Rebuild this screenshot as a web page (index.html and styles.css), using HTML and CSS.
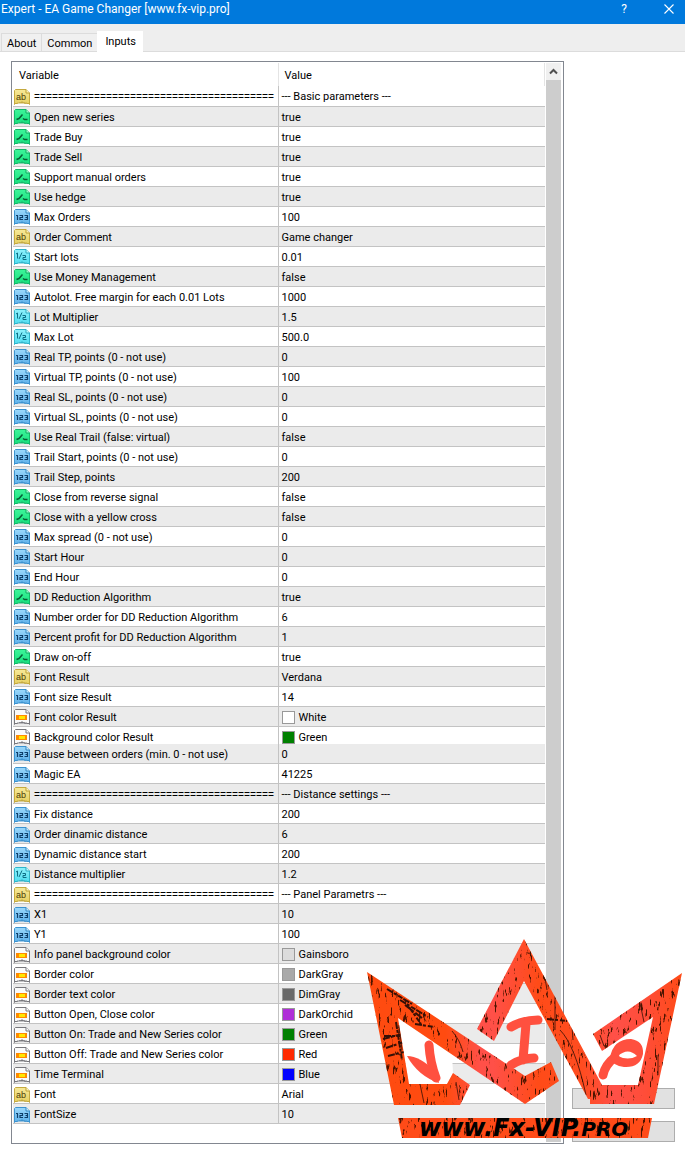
FILE: index.html
```html
<!DOCTYPE html>
<html lang="en">
<head>
<meta charset="utf-8">
<title>Expert - EA Game Changer</title>
<link rel="stylesheet" href="styles.css">
</head>
<body>
<svg class="defs" aria-hidden="true">
  <defs>
    <linearGradient id="gy" x2="0" y2="1"><stop offset="0" stop-color="#f8e998"/><stop offset="1" stop-color="#e6d060"/></linearGradient>
    <linearGradient id="gg" x2="0" y2="1"><stop offset="0" stop-color="#3df59a"/><stop offset="1" stop-color="#14e07c"/></linearGradient>
    <linearGradient id="gb" x2="0" y2="1"><stop offset="0" stop-color="#9bd8fb"/><stop offset="1" stop-color="#5cb0ea"/></linearGradient>
    <linearGradient id="gc" x2="0" y2="1"><stop offset="0" stop-color="#8ff1fb"/><stop offset="1" stop-color="#4cdcf0"/></linearGradient>
    <path id="sheet" d="M.5 1.500L1.500 .5H12L15.500 4V15.500L14 14L13 15L12 13.500L11 15L10 13L9 14.500L8 12.500L7 14.500L6 13L5 14.500L4 13.500L3 15L2 14L.5 15.500Z"/>
    <symbol id="ab" viewBox="0 0 16 16"><use href="#sheet" fill="url(#gy)" stroke="#c4a93f"/><path d="M12 .5V4H15.500" fill="#fff6bd" stroke="#bc9f35"/><text x="2" y="11" class="glyph">ab</text></symbol>
    <symbol id="bool" viewBox="0 0 16 16"><use href="#sheet" fill="url(#gg)" stroke="#12b868"/><path d="M12 .5V4H15.500" fill="#9dffd0" stroke="#12a860"/><path d="M2.500 10.500L5 9.500L8.500 5.500M9 9.500L10.500 10.500H13.500" fill="none" stroke="#075c36" stroke-width="1.500"/></symbol>
    <symbol id="int" viewBox="0 0 16 16"><use href="#sheet" fill="url(#gb)" stroke="#3b92cf"/><path d="M12 .5V4H15.500" fill="#c9ecff" stroke="#3387c2"/><path d="M2 6.500H3.500V11M5.500 6.500H8.500V8.500H6V10.500H9M10.500 6.500H13.500V10.500H10.500M11.500 8.500H13.500" fill="none" stroke="#0d3d68" stroke-width="1.200"/></symbol>
    <symbol id="num" viewBox="0 0 16 16"><use href="#sheet" fill="url(#gc)" stroke="#2fb4ca"/><path d="M12 .5V4H15.500" fill="#c9fbff" stroke="#2ba9bf"/><path d="M2 5L3.500 4V9.500M5 10L8 3.500M8.500 6.500H11.500V8.500H9V10.500H12.500" fill="none" stroke="#0d6d84"/></symbol>
    <symbol id="color" viewBox="0 0 16 16"><use href="#sheet" fill="#fafafa" stroke="#77777c"/><path d="M12 .5V4H15.500" fill="#fff" stroke="#77777c"/><path fill="#ff8a00" d="M2 6H13V11H2Z"/><path fill="#ffe600" d="M5 7H11V10H5Z"/></symbol>
  </defs>
</svg>
<div class="dialog">
  <header class="titlebar">
    <h1 class="title">Expert - EA Game Changer [www.fx-vip.pro]</h1>
    <button class="caption-btn" type="button" aria-label="Help">?</button>
    <button class="caption-btn" type="button" aria-label="Close"><svg width="10" height="10" viewBox="0 0 10 10"><path d="M.5 .5L9.500 9.500M9.500 .5L.5 9.500" stroke="#fff" stroke-width="1.100"/></svg></button>
  </header>
  <nav class="tabs" role="tablist">
    <button class="tab" role="tab" type="button">About</button>
    <button class="tab" role="tab" type="button">Common</button>
    <button class="tab active" role="tab" type="button" aria-selected="true">Inputs</button>
  </nav>
  <main class="panel">
    <div class="list">
      <table class="grid">
        <thead><tr><th class="name">Variable</th><th>Value</th></tr></thead>
        <tbody id="rows"></tbody>
      </table>
      <div class="scrollbar"><button class="scroll-up" type="button" aria-label="Scroll up"><svg width="9" height="7" viewBox="0 0 9 7"><path d="M1 5.500L4.500 2L8 5.500" fill="none" stroke="#505050" stroke-width="2"/></svg></button></div>
    </div>
    <aside class="actions">
      <button class="action" type="button" aria-label="Load"></button>
      <button class="action" type="button" aria-label="Save"></button>
    </aside>
    <svg class="crown" viewBox="366 938 318 208" role="img" aria-label="VIP crown">
      <defs>
        <path id="crown-left" d="M367 972L525 1076L551 1062L559 1081L525 1104L398 1018L409 1084H447L453 1073L470 1085L460 1105H394Z"/>
        <path id="crown-right" d="M524 939L602 1085H638L653 1017L602 1051L593 1034L682 973L654 1104H590V1099H588L524 981L494 1041L477 1029Z"/>
        <clipPath id="crown-clip"><use href="#crown-left"/><use href="#crown-right"/></clipPath>
        <filter id="scratch" x="0" y="0" width="1" height="1" color-interpolation-filters="sRGB">
          <feTurbulence type="fractalNoise" baseFrequency=".42 .08" numOctaves="4" seed="12" result="n"/>
          <feColorMatrix in="n" values="0 0 0 0 .3  0 0 0 0 .08  0 0 0 0 0  0 0 0 10 -6.3" result="s"/>
          <feComposite in="s" in2="SourceGraphic" operator="in" result="t"/>
          <feMerge><feMergeNode in="SourceGraphic"/><feMergeNode in="t"/></feMerge>
        </filter>
        <linearGradient id="red" gradientUnits="userSpaceOnUse" x1="366" y1="0" x2="684" y2="0"><stop offset="0" stop-color="#ff4b10"/><stop offset=".25" stop-color="#ff4b10"/><stop offset=".36" stop-color="#ff5048"/><stop offset=".4" stop-color="#ff5048"/><stop offset=".54" stop-color="#ff4b18"/><stop offset=".68" stop-color="#ff4c20"/><stop offset=".78" stop-color="#ff5048"/><stop offset=".88" stop-color="#ff4d38"/><stop offset="1" stop-color="#ff4b14"/></linearGradient>
      </defs>
      <path fill="#fff" d="M398 1018L452 1054L453 1073L447 1084H409Z"/>
      <g filter="url(#scratch)">
        <g fill="url(#red)"><use href="#crown-left"/><use href="#crown-right"/></g>
        <path fill="#ff4b18" d="M398 1118H652L648 1138H402Z"/>
      </g>
      <g fill="none" stroke="#ff503f" stroke-width="9" stroke-linecap="round" stroke-linejoin="round">
        <path d="M429 1045Q430 1062 436 1078M511 1027Q523 1020 538 1020M526 1024L523 1060M511 1065Q522 1058 534 1058"/>
        <path d="M603 1075Q605 1065 615 1057"/>
      </g>
      <path fill="#ff503f" d="M407 1056Q420 1056 436 1072L439 1083Q418 1076 407 1056Z"/>
      <path fill="#ff503f" fill-rule="evenodd" d="M610 1058Q613 1039 631 1039Q644 1041 643 1054Q640 1068 624 1067Q613 1066 610 1058ZM618 1056Q628 1047 637 1056Q628 1061 618 1056Z"/>
      <g fill="none" stroke="#351006" clip-path="url(#crown-clip)">
        <path opacity=".8" d="M399 1025L402 1050M452 1031Q460 1040 463 1052M543 966L547 990M555 988V1030M571 1012L573 1040M560 1030Q575 1045 586 1095M640 1003L644 1022M658 1055V1075M600 1035L604 1046M456 1082L459 1100M420 1084L424 1103"/>
        <path stroke-width="2" d="M387 989L412 1004M400 1000L428 1017M405 1005L422 1018M415 1024L434 1027M409 1007L421 1024M383 1039L402 1034M384 1036H400M386 1048L404 1042M388 1056L404 1052M396 1022L402 1060M425 1040L434 1046M547 1019L567 1021" stroke-dasharray="7 1 3 2 5 1"/>
      </g>
      <text class="crown-text" x="419" y="1136">www.Fx-VIP.<tspan class="small">PRO</tspan></text>
    </svg>
  </main>
</div>
<script src="rows.js"></script>
</body>
</html>
```
FILE: styles.css
```css
* { box-sizing: border-box; }
body { margin: 0; background: #fff; color: #000; font: 11px/20px Roboto, "Liberation Sans", Arial, sans-serif; }
button { font: inherit; color: inherit; padding: 0; border: 0; background: none; }
.defs { position: absolute; width: 0; height: 0; }
.dialog { min-height: 100vh; display: flex; flex-direction: column; }
.titlebar { display: flex; align-items: flex-start; height: 24px; padding-right: 6px; background: #0079dc; color: #fff; font: 12px/18px Roboto, "Open Sans", sans-serif; }
.title { margin: 0 auto 0 1px; font: inherit; }
.caption-btn { width: 45px; height: 17px; padding-left: 25px; display: flex; align-items: center; justify-content: center; }
.tabs { display: flex; align-items: flex-end; height: 28px; padding-left: 1px; background: #eee; border-bottom: 1px solid #dcdcdc; }
.tab { height: 18px; line-height: 19px; padding: 0 5px; border: 1px solid #dcdcdc; border-bottom: 0; border-right: 0; background: #f0f0f0; }
.tab.active { height: 21px; margin-bottom: -1px; padding: 0 7px 1px; background: #fff; border-color: #fff; }
.panel { position: relative; flex: 1; display: flex; padding: 9px 10px 9px 11px; gap: 8px; }
.list { flex: 1; display: flex; align-items: stretch; border: 1px solid #828790; padding: 1px; }
.grid { flex: 1; align-self: flex-start; table-layout: fixed; border-collapse: collapse; }
.grid th { height: 23px; padding: 2px 6px 0; line-height: 19px; font-weight: 400; text-align: left; border-right: 1px solid #e4e4e4; }
.grid th.name { width: 265px; }
.grid td { height: 20px; padding: 0 3px; line-height: 17px; border-bottom: 1px solid #c3c3c3; white-space: nowrap; }
.grid td:first-child { padding-left: 1px; border-right: 1px solid #c3c3c3; }
.grid tr:nth-child(even) td { background: #ebebeb; }
.grid tr.joined td { height: 17px; border-bottom: 0; }
.cell { display: flex; align-items: center; gap: 4px; height: 19px; padding-top: 2px; }
.joined .cell { margin-bottom: -2px; }
.icon { width: 16px; height: 16px; flex: none; }
.rule { font: 10px/17px "Liberation Mono", monospace; padding-top: 1px; }
.swatch { width: 13px; height: 13px; border: 1px solid #999; }
.glyph { font: 9px "Liberation Sans", sans-serif; fill: #4c3c08; }
.scrollbar { width: 17px; background: #cdcdcd; border: 1px solid #fff; border-width: 0 1px; }
.scroll-up { width: 100%; height: 17px; display: flex; align-items: center; justify-content: center; background: #f0f0f0; }
.actions { width: 103px; display: flex; flex-direction: column; justify-content: flex-end; gap: 12px; padding-bottom: 2px; }
.action { height: 21px; background: #e1e1e1; border: 1px solid #adadad; }
.crown { position: absolute; right: 1px; bottom: 7px; width: 318px; height: 208px; overflow: visible; pointer-events: none; }
.crown-text { font: italic 700 24px "DejaVu Sans", sans-serif; fill: #000; }
.crown-text .small { font-size: 20px; }
```
FILE: rows.js
```js
const rule = "=".repeat(40);
const rows = [
  ["ab", rule, "--- Basic parameters ---"],
  ["bool", "Open new series", "true"],
  ["bool", "Trade Buy", "true"],
  ["bool", "Trade Sell", "true"],
  ["bool", "Support manual orders", "true"],
  ["bool", "Use hedge", "true"],
  ["int", "Max Orders", "100"],
  ["ab", "Order Comment", "Game changer"],
  ["num", "Start lots", "0.01"],
  ["bool", "Use Money Management", "false"],
  ["int", "Autolot. Free margin for each 0.01 Lots", "1000"],
  ["num", "Lot Multiplier", "1.5"],
  ["num", "Max Lot", "500.0"],
  ["int", "Real TP, points (0 - not use)", "0"],
  ["int", "Virtual TP, points (0 - not use)", "100"],
  ["int", "Real SL, points (0 - not use)", "0"],
  ["int", "Virtual SL, points (0 - not use)", "0"],
  ["bool", "Use Real Trail (false: virtual)", "false"],
  ["int", "Trail Start, points (0 - not use)", "0"],
  ["int", "Trail Step, points", "200"],
  ["bool", "Close from reverse signal", "false"],
  ["bool", "Close with a yellow cross", "false"],
  ["int", "Max spread (0 - not use)", "0"],
  ["int", "Start Hour", "0"],
  ["int", "End Hour", "0"],
  ["bool", "DD Reduction Algorithm", "true"],
  ["int", "Number order for DD Reduction Algorithm", "6"],
  ["int", "Percent profit for DD Reduction Algorithm", "1"],
  ["bool", "Draw on-off", "true"],
  ["ab", "Font Result", "Verdana"],
  ["int", "Font size Result", "14"],
  ["color", "Font color Result", "White", "#ffffff"],
  ["color", "Background color Result", "Green", "#008000"],
  ["int", "Pause between orders (min. 0 - not use)", "0"],
  ["int", "Magic EA", "41225"],
  ["ab", rule, "--- Distance settings ---"],
  ["int", "Fix distance", "200"],
  ["int", "Order dinamic distance", "6"],
  ["int", "Dynamic distance start", "200"],
  ["num", "Distance multiplier", "1.2"],
  ["ab", rule, "--- Panel Parametrs ---"],
  ["int", "X1", "10"],
  ["int", "Y1", "100"],
  ["color", "Info panel background color", "Gainsboro", "#dcdcdc"],
  ["color", "Border color", "DarkGray", "#a9a9a9"],
  ["color", "Border text color", "DimGray", "#696969"],
  ["color", "Button Open, Close color", "DarkOrchid", "#b02fd8"],
  ["color", "Button On: Trade and New Series color", "Green", "#008000"],
  ["color", "Button Off: Trade and New Series color", "Red", "#ff2a00"],
  ["color", "Time Terminal", "Blue", "#0000ff"],
  ["ab", "Font", "Arial"],
  ["int", "FontSize", "10"]
];
document.getElementById("rows").innerHTML = rows.map(([icon, name, value, color]) => {
  const swatch = color ? `<span class="swatch" style="background:${color}"></span>` : "";
  return `<tr${name === "Background color Result" ? ' class="joined"' : ""}>
    <td><div class="cell"><svg class="icon"><use href="#${icon}"/></svg><span${name === rule ? ' class="rule"' : ""}>${name}</span></div></td>
    <td><div class="cell">${swatch}<span>${value}</span></div></td></tr>`;
}).join("");
```
